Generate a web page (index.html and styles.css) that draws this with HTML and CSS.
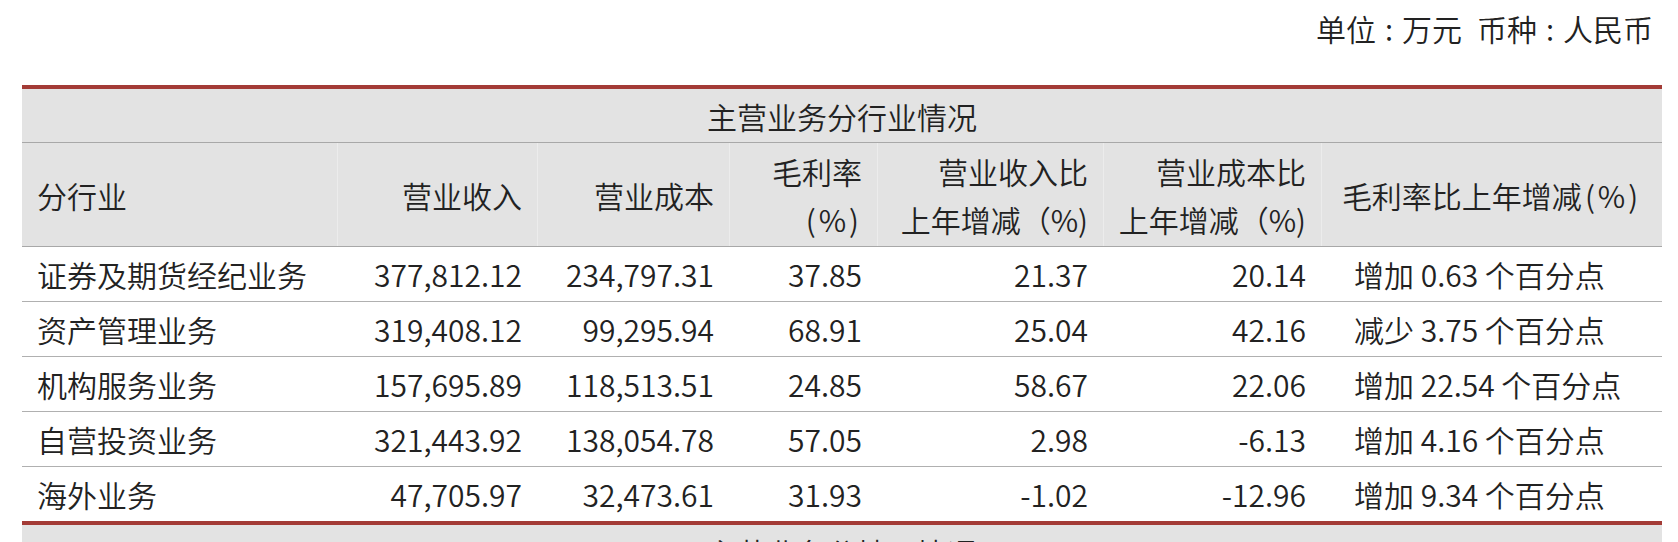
FILE: index.html
```html
<!DOCTYPE html>
<html lang="zh-CN">
<head>
<meta charset="utf-8">
<title>主营业务分行业情况</title>
<link rel="stylesheet" href="styles.css">
</head>
<body>
<div class="page">
  <div class="unit">单位<span class="colon">:</span>万元<span class="gap"></span>币种<span class="colon">:</span>人民币</div>
  <table class="fin">
    <colgroup>
      <col class="c0"><col class="c1"><col class="c2"><col class="c3"><col class="c4"><col class="c5"><col class="c6">
    </colgroup>
    <thead>
      <tr class="title-row"><th colspan="7" class="title">主营业务分行业情况</th></tr>
      <tr class="head-row">
        <th class="left">分行业</th>
        <th class="num">营业收入</th>
        <th class="num">营业成本</th>
        <th class="num">毛利率<br><span class="p">(</span>%<span class="p">)</span></th>
        <th class="num">营业收入比<br>上年增减（%)</th>
        <th class="num">营业成本比<br>上年增减（%)</th>
        <th class="center">毛利率比上年增减<span class="p">(</span>%<span class="p">)</span></th>
      </tr>
    </thead>
    <tbody>
      <tr><td class="left">证券及期货经纪业务</td><td class="num">377,812.12</td><td class="num">234,797.31</td><td class="num">37.85</td><td class="num">21.37</td><td class="num">20.14</td><td class="chg">增加 0.63 个百分点</td></tr>
      <tr><td class="left">资产管理业务</td><td class="num">319,408.12</td><td class="num">99,295.94</td><td class="num">68.91</td><td class="num">25.04</td><td class="num">42.16</td><td class="chg">减少 3.75 个百分点</td></tr>
      <tr><td class="left">机构服务业务</td><td class="num">157,695.89</td><td class="num">118,513.51</td><td class="num">24.85</td><td class="num">58.67</td><td class="num">22.06</td><td class="chg">增加 22.54 个百分点</td></tr>
      <tr><td class="left">自营投资业务</td><td class="num">321,443.92</td><td class="num">138,054.78</td><td class="num">57.05</td><td class="num">2.98</td><td class="num">-6.13</td><td class="chg">增加 4.16 个百分点</td></tr>
      <tr class="last"><td class="left">海外业务</td><td class="num">47,705.97</td><td class="num">32,473.61</td><td class="num">31.93</td><td class="num">-1.02</td><td class="num">-12.96</td><td class="chg">增加 9.34 个百分点</td></tr>
    </tbody>
  </table>
  <table class="fin">
    <thead>
      <tr class="title-row"><th class="title">主营业务分地区情况</th></tr>
    </thead>
  </table>
</div>
</body>
</html>
```
FILE: styles.css
```css
html, body {
  margin: 0;
  padding: 0;
  background: #ffffff;
}
body {
  font-family: "Noto Sans CJK SC", "Noto Sans", sans-serif;
  font-size: 30px;
  font-weight: 350;
  color: #222222;
  overflow: hidden;
}
.page {
  width: 1640px;
  padding-left: 22px;
}
.unit {
  text-align: right;
  padding-top: 8px;
  padding-right: 9px;
  line-height: 40px;
  height: 40px;
  margin-bottom: 37px;
}
.colon {
  display: inline-block;
  width: 26px;
  text-align: center;
}
.gap {
  display: inline-block;
  width: 15px;
}
.p {
  padding: 0 3px;
}
.fin {
  width: 1640px;
  border-collapse: separate;
  border-spacing: 0;
  border-top: 4px solid #a33b36;
  table-layout: fixed;
}
.c0 { width: 315px; }
.c1 { width: 200px; }
.c2 { width: 192px; }
.c3 { width: 148px; }
.c4 { width: 226px; }
.c5 { width: 218px; }
.c6 { width: 341px; }
th, td {
  padding: 0;
  font-weight: 350;
  vertical-align: middle;
  white-space: nowrap;
}
.title-row { height: 54px; }
.title-row th {
  background: #e3e3e3;
  text-align: center;
  border-bottom: 1px solid #a8a8a8;
  line-height: 40px;
}
.head-row { height: 104px; }
.head-row th {
  background: #e3e3e3;
  line-height: 48px;
  border-bottom: 1px solid #a8a8a8;
}
.head-row th + th {
  box-shadow: inset 1px 0 0 #ececec;
}
tbody tr { height: 55px; }
tbody td {
  border-bottom: 1px solid #b0b0b0;
  line-height: 40px;
}
tbody tr.last { height: 54px; }
tbody tr.last td { border-bottom: none; }
.left {
  text-align: left;
  padding-left: 15px;
}
.num {
  text-align: right;
  padding-right: 15px;
}
.center {
  text-align: center;
}
.chg {
  text-align: left;
  padding-left: 33px;
}
```
